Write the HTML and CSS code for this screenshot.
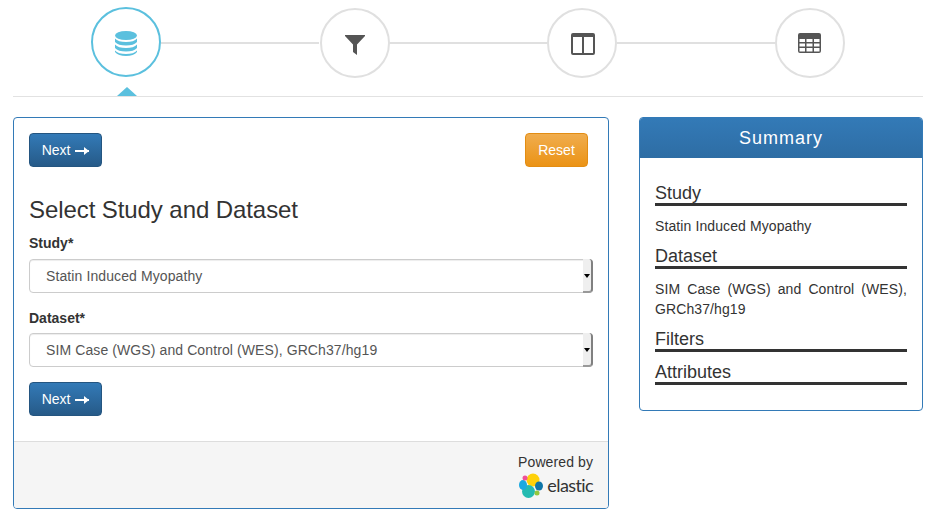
FILE: index.html
```html
<!DOCTYPE html>
<html lang="en">
<head>
  <meta charset="UTF-8">
  <title>Select Study and Dataset</title>
  <link rel="stylesheet" href="styles.css">
</head>
<body>

  <div class="stepper">
    <div class="step active">
      <svg class="icon-db" width="22" height="25" viewBox="0 0 22 25"><ellipse cx="11" cy="4.500" rx="11" ry="4.500"/><path d="M0 7.500C2 10 6 11 11 11s9-1 11-3.500V11c-2 2.500-6 3.500-11 3.500S2 13.500 0 11z"/><path d="M0 13.500C2 16 6 17 11 17s9-1 11-3.500V17c-2 2.500-6 3.500-11 3.500S2 19.500 0 17z"/><path d="M0 19.500C2 22 6 23 11 23s9-1 11-3.500V21c-2 2.500-6 4-11 4S2 23.500 0 21z"/></svg>
    </div>
    <div class="line"></div>
    <div class="step step-filter">
      <svg class="icon-filter" width="20" height="20" viewBox="0 0 20 20"><path d="M0 0H20V1L12 9.500V20L8 17V9.500L0 1z"/></svg>
    </div>
    <div class="line"></div>
    <div class="step">
      <svg class="icon-cols" width="24" height="22" viewBox="0 0 24 22"><path fill-rule="evenodd" d="M2 0H22A2 2 0 0 1 24 2V20A2 2 0 0 1 22 22H2A2 2 0 0 1 0 20V2A2 2 0 0 1 2 0zM2 4V20H11V4zM13 4V20H22V4z"/></svg>
    </div>
    <div class="line"></div>
    <div class="step">
      <svg class="icon-table" width="23" height="20" viewBox="0 0 23 20"><path fill-rule="evenodd" d="M2 0H21A2 2 0 0 1 23 2V18A2 2 0 0 1 21 20H2A2 2 0 0 1 0 18V2A2 2 0 0 1 2 0zM1.500 6V9H7V6zM8.500 6V9H14.500V6zM16 6V9H21.500V6zM1.500 10.500V13.500H7V10.500zM8.500 10.500V13.500H14.500V10.500zM16 10.500V13.500H21.500V10.500zM1.500 15V18.500H7V15zM8.500 15V18.500H14.500V15zM16 15V18.500H21.500V15z"/></svg>
    </div>
    <div class="pointer"></div>
  </div>

  <div class="content">
    <div class="panel main-panel">
      <div class="panel-body">
        <div class="top-buttons">
          <button class="btn btn-next">Next <span class="arrow"></span></button>
          <button class="btn btn-reset">Reset</button>
        </div>
        <h3>Select Study and Dataset</h3>
        <label>Study*</label>
        <div class="select-box">
          <select><option>Statin Induced Myopathy</option></select>
          <span class="select-arrow"></span>
        </div>
        <label>Dataset*</label>
        <div class="select-box">
          <select><option>SIM Case (WGS) and Control (WES), GRCh37/hg19</option></select>
          <span class="select-arrow"></span>
        </div>
        <button class="btn btn-next">Next <span class="arrow"></span></button>
      </div>
      <div class="panel-footer">
        <div class="powered">Powered by</div>
        <div class="elastic">
          <svg width="24" height="25" viewBox="0 0 24 25">
            <circle cx="14" cy="7" r="6.500" fill="#fed10a"/>
            <circle cx="9.500" cy="18.500" r="6.500" fill="#24bbb1"/>
            <ellipse cx="4" cy="12" rx="4" ry="5" fill="#1ba9e1"/>
            <ellipse cx="20" cy="13" rx="4" ry="4.500" fill="#0f75a8"/>
            <circle cx="6" cy="5" r="2.500" fill="#ef5098"/>
            <circle cx="18" cy="20" r="2.500" fill="#93c83e"/>
          </svg>
          <span class="elastic-name">elastic</span>
        </div>
      </div>
    </div>

    <div class="panel summary">
      <div class="summary-head">Summary</div>
      <div class="summary-body">
        <h4>Study</h4>
        <p>Statin Induced Myopathy</p>
        <h4>Dataset</h4>
        <p class="just">SIM Case (WGS) and Control (WES), GRCh37/hg19</p>
        <h4>Filters</h4>
        <h4>Attributes</h4>
      </div>
    </div>
  </div>

</body>
</html>
```

FILE: styles.css
```css
* {
  box-sizing: border-box;
}
body {
  margin: 0;
  font-family: "Liberation Sans", Arial, sans-serif;
  font-size: 14px;
  line-height: 20px;
  color: #333;
  background-color: white;
}
.stepper {
  position: relative;
  display: flex;
  align-items: center;
  height: 97px;
  margin: 0 12px 20px 13px;
  padding: 0 78px 10px;
  border-bottom: 1px solid #e2e2e2;
}
.step {
  flex: none;
  display: flex;
  justify-content: center;
  align-items: center;
  width: 70px;
  height: 70px;
  border: 2px solid #e0e0e0;
  border-radius: 50%;
  fill: #555;
}
.step.active {
  margin-top: -2px;
  border-color: #5bc0de;
  fill: #5bc0de;
}
.step-filter {
  margin: 0 -1px 0 1px;
}
.icon-db {
  margin-top: 2px;
}
.icon-filter {
  margin-top: 4px;
}
.icon-cols {
  margin: 2px 0 0 2px;
}
.icon-table {
  margin-right: 1px;
}
.line {
  flex: 1;
  height: 2px;
  background-color: #e0e0e0;
}
.pointer {
  position: absolute;
  left: 104px;
  bottom: 0;
  border-left: 10px solid transparent;
  border-right: 10px solid transparent;
  border-bottom: 9px solid #5bc0de;
}
.content {
  display: flex;
  align-items: flex-start;
  gap: 30px;
  padding: 0 12px 0 13px;
}
.panel {
  border: 1px solid #337ab7;
  border-radius: 4px;
  background-color: white;
}
.main-panel {
  width: 596px;
  height: 392px;
  display: flex;
  flex-direction: column;
}
.panel-body {
  flex: 1;
  padding: 15px;
}
.top-buttons {
  display: flex;
  justify-content: space-between;
  margin-bottom: 29px;
  padding-right: 5px;
}
.btn {
  height: 34px;
  padding: 0;
  font-family: inherit;
  font-size: 14px;
  color: white;
  border-radius: 4px;
  cursor: pointer;
}
.btn-next {
  width: 73px;
  border: 1px solid #245580;
  background: linear-gradient(to bottom, #337ab7, #265a88);
}
.btn-reset {
  width: 63px;
  border: 1px solid #e38d13;
  background: linear-gradient(to bottom, #f0ad4e, #eb9316);
}
.arrow {
  display: inline-block;
  position: relative;
  width: 14px;
  height: 2px;
  margin-left: 1px;
  vertical-align: 3px;
  background-color: white;
}
.arrow::after {
  content: "";
  position: absolute;
  right: 0;
  top: -3px;
  border-left: 5px solid white;
  border-top: 4px solid transparent;
  border-bottom: 4px solid transparent;
}
h3 {
  margin: 0 0 10px;
  font-size: 24px;
  font-weight: 500;
  line-height: 27px;
  letter-spacing: -0.08px;
}
label {
  display: block;
  margin-bottom: 6px;
  font-weight: bold;
}
.select-box + label {
  margin-bottom: 5px;
}
.select-box {
  position: relative;
  height: 34px;
  margin-bottom: 15px;
}
select {
  appearance: none;
  width: 100%;
  height: 34px;
  padding: 6px 12px 6px 16px;
  font-family: inherit;
  font-size: 14px;
  letter-spacing: 0.1px;
  color: #555;
  border: 1px solid #ccc;
  border-radius: 4px;
  background-color: white;
  box-shadow: inset 0 1px 1px rgba(0, 0, 0, 0.075);
}
.select-arrow {
  position: absolute;
  top: 0;
  right: 0;
  width: 10px;
  height: 34px;
  background-color: #efefef;
  border-right: 2px solid #808080;
  border-bottom: 2px solid #999;
  border-radius: 0 4px 4px 0;
}
.select-arrow::after {
  content: "";
  position: absolute;
  left: 1px;
  top: 15px;
  border-top: 4px solid black;
  border-left: 3px solid transparent;
  border-right: 3px solid transparent;
}
.panel-footer {
  height: 67px;
  padding: 10px 15px;
  background-color: #f5f5f5;
  border-top: 1px solid #ddd;
  border-radius: 0 0 3px 3px;
  text-align: right;
}
.powered {
  letter-spacing: 0.1px;
}
.elastic {
  display: flex;
  justify-content: flex-end;
  align-items: center;
  gap: 4px;
  margin-top: 1px;
  font-family: Lato, sans-serif;
  font-size: 18px;
  letter-spacing: -0.6px;
}
.elastic-name {
  margin-top: -2px;
}
.summary {
  width: 284px;
  height: 294px;
}
.summary-head {
  height: 40px;
  padding-top: 10px;
  font-size: 18px;
  letter-spacing: 1px;
  text-align: center;
  color: white;
  background: linear-gradient(to bottom, #337ab7, #2e6da4);
  border-radius: 3px 3px 0 0;
}
.summary-body {
  padding: 25px 15px 0;
}
h4 {
  margin: 0 0 10px;
  font-size: 18px;
  font-weight: 500;
  line-height: 20px;
  border-bottom: 3px solid #333;
}
p {
  margin: 0 0 10px;
  letter-spacing: 0.1px;
}
.just {
  text-align: justify;
}
```
